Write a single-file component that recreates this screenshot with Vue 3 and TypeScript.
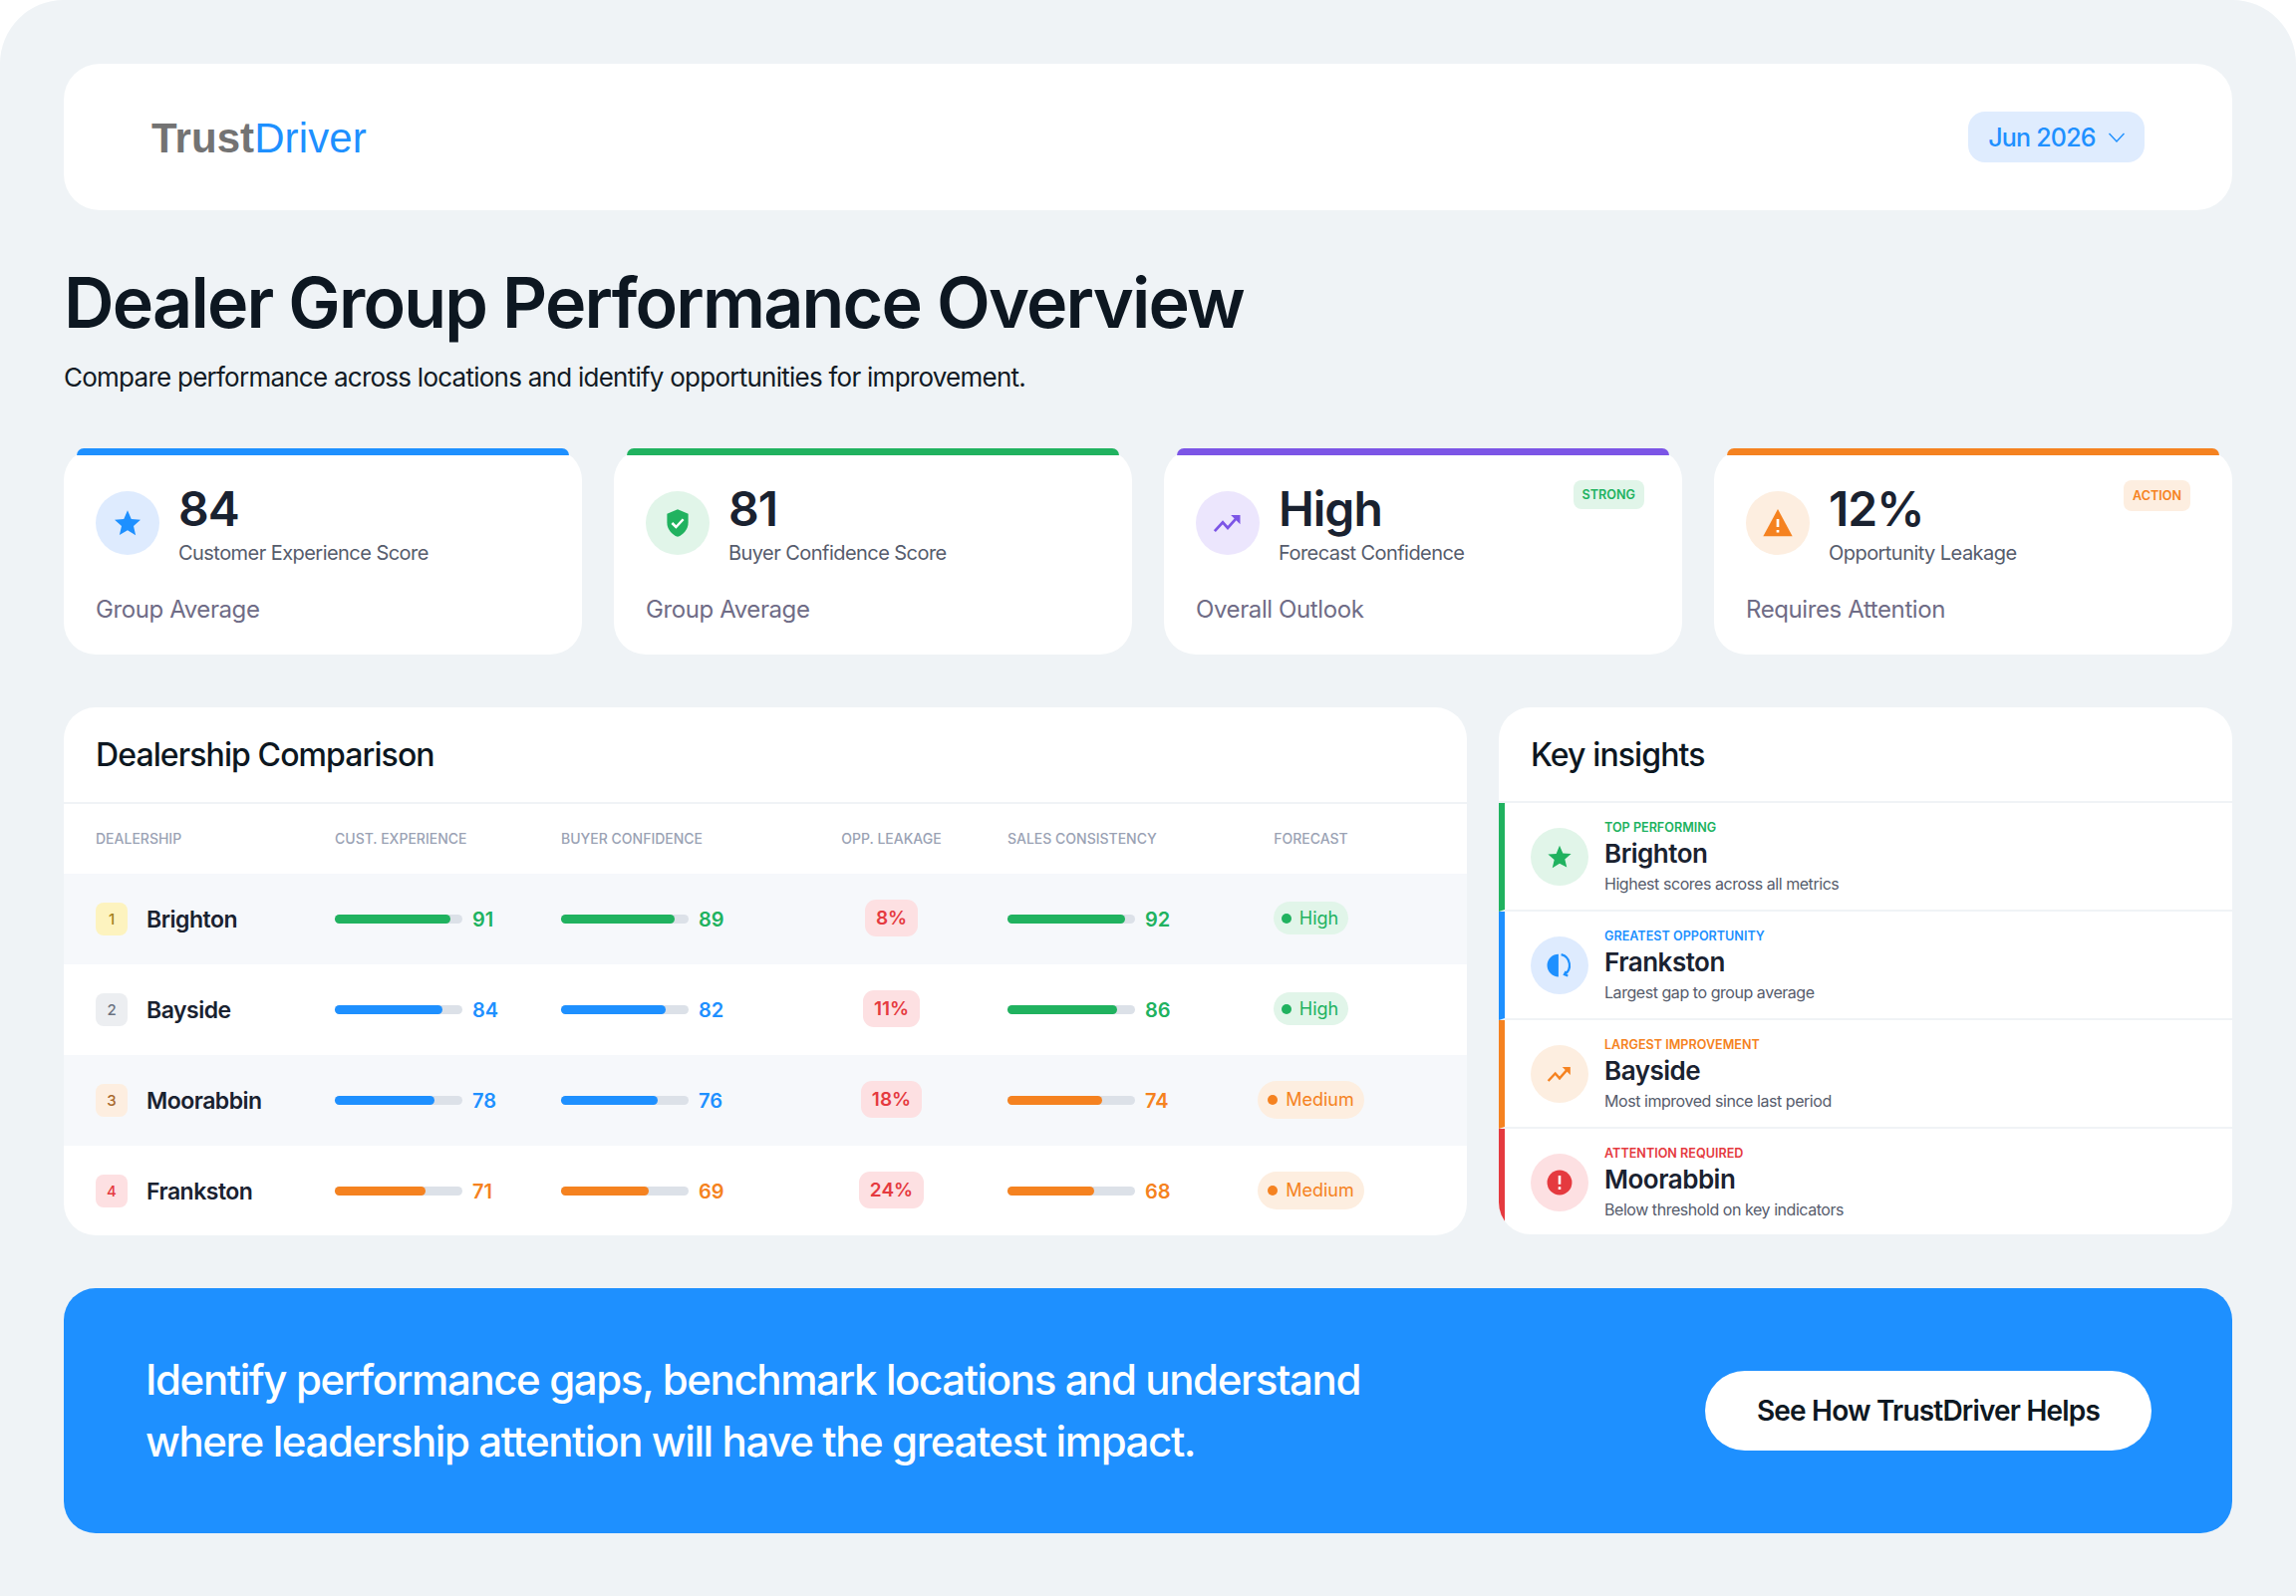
<script setup lang="ts">
interface Kpi { value: string; label: string; foot: string; color: string; soft: string; icon: string; tag?: string }
interface Metric { v: number; w: number; c: string }
interface Row { rank: number; name: string; rc: string; rbg: string; m1: Metric; m2: Metric; leak: string; m3: Metric; fc: string }
interface Insight { tag: string; name: string; desc: string; color: string; soft: string; icon: string }

const G = '#20b25f', B = '#1e90ff', O = '#f58220', R = '#e53a3f', P = '#7c55e6'
const kpis: Kpi[] = [
  { value: '84', label: 'Customer Experience Score', foot: 'Group Average', color: B, soft: '#deebfe', icon: 'star' },
  { value: '81', label: 'Buyer Confidence Score', foot: 'Group Average', color: G, soft: '#e1f5e9', icon: 'shield' },
  { value: 'High', label: 'Forecast Confidence', foot: 'Overall Outlook', color: P, soft: '#ece6fd', icon: 'trend', tag: 'STRONG' },
  { value: '12%', label: 'Opportunity Leakage', foot: 'Requires Attention', color: O, soft: '#fdeee0', icon: 'warn', tag: 'ACTION' }
]
const rows: Row[] = [
  { rank: 1, name: 'Brighton', rc: '#a3811c', rbg: '#fdf3bf', m1: { v: 91, w: 91, c: G }, m2: { v: 89, w: 89, c: G }, leak: '8%', m3: { v: 92, w: 92, c: G }, fc: 'High' },
  { rank: 2, name: 'Bayside', rc: '#6b7280', rbg: '#eceef1', m1: { v: 84, w: 84, c: B }, m2: { v: 82, w: 82, c: B }, leak: '11%', m3: { v: 86, w: 86, c: G }, fc: 'High' },
  { rank: 3, name: 'Moorabbin', rc: '#a9692c', rbg: '#fdeee0', m1: { v: 78, w: 78, c: B }, m2: { v: 76, w: 76, c: B }, leak: '18%', m3: { v: 74, w: 74, c: O }, fc: 'Medium' },
  { rank: 4, name: 'Frankston', rc: R, rbg: '#fde0e2', m1: { v: 71, w: 71, c: O }, m2: { v: 69, w: 69, c: O }, leak: '24%', m3: { v: 68, w: 68, c: O }, fc: 'Medium' }
]
const insights: Insight[] = [
  { tag: 'TOP PERFORMING', name: 'Brighton', desc: 'Highest scores across all metrics', color: G, soft: '#e1f5e9', icon: 'star' },
  { tag: 'GREATEST OPPORTUNITY', name: 'Frankston', desc: 'Largest gap to group average', color: B, soft: '#deebfe', icon: 'half' },
  { tag: 'LARGEST IMPROVEMENT', name: 'Bayside', desc: 'Most improved since last period', color: O, soft: '#fdeee0', icon: 'trend' },
  { tag: 'ATTENTION REQUIRED', name: 'Moorabbin', desc: 'Below threshold on key indicators', color: R, soft: '#fde0e2', icon: 'alert' }
]
const heads = ['DEALERSHIP', 'CUST. EXPERIENCE', 'BUYER CONFIDENCE', 'OPP. LEAKAGE', 'SALES CONSISTENCY', 'FORECAST']
</script>

<template>
  <div class="frame">
    <header class="top">
      <div class="logo"><b>Trust</b><span>Driver</span></div>
      <div class="date">Jun 2026
        <svg width="16" height="10" viewBox="0 0 16 10" fill="none" stroke="#1e90ff" stroke-width="1.4"><path d="M.5 1 8 9l7.500-8" /></svg>
      </div>
    </header>

    <h1>Dealer Group Performance Overview</h1>
    <p class="sub">Compare performance across locations and identify opportunities for improvement.</p>

    <section class="kpis">
      <article v-for="k in kpis" :key="k.label" class="kpi">
        <div class="kbar" :style="{ background: k.color }"></div>
        <div class="kmain">
          <div class="kcircle" :style="{ background: k.soft }">
            <svg v-if="k.icon === 'star'" width="30" height="30" viewBox="0 0 24 24" :fill="k.color"><path d="M12 1.800l3 7 7.400.6-5.600 4.900 1.700 7.400L12 17.800l-6.500 3.900 1.700-7.400L1.600 9.400 9 8.800z" /></svg>
            <svg v-else-if="k.icon === 'shield'" width="30" height="30" viewBox="0 0 24 24"><path :fill="k.color" d="M12 1 3.500 4.500v7c0 5.300 3.600 9.700 8.500 11.500 4.900-1.800 8.500-6.200 8.500-11.500v-7z" /><path d="M7.500 12l3.200 3.200 5.800-6.200" fill="none" stroke="#fff" stroke-width="2" /></svg>
            <svg v-else-if="k.icon === 'trend'" width="30" height="30" viewBox="0 0 24 24" fill="none" :stroke="k.color" stroke-width="2.200"><path d="M1.500 18.500 8 11.500l4 4.500 7.500-8.500" /><path stroke="none" :fill="k.color" d="M14.500 5.500H22V13z" /></svg>
            <svg v-else width="32" height="32" viewBox="0 0 24 24"><path :fill="k.color" d="M12 1.500 23 22H1z" /><path d="M12 9v6M12 17.200v2" stroke="#fff" stroke-width="2" /></svg>
          </div>
          <div class="ktext">
            <div class="kval">{{ k.value }}</div>
            <div class="klabel">{{ k.label }}</div>
          </div>
          <span v-if="k.tag" class="ktag" :class="k.tag === 'STRONG' ? 'strong' : 'action'">{{ k.tag }}</span>
        </div>
        <div class="kfoot">{{ k.foot }}</div>
      </article>
    </section>

    <section class="mid">
      <div class="card compare">
        <h2>Dealership Comparison</h2>
        <div class="grid head">
          <div v-for="(h, i) in heads" :key="h" :class="{ mid1: i === 3 || i === 5 }">{{ h }}</div>
        </div>
        <div v-for="(r, i) in rows" :key="r.name" class="grid row" :class="{ alt: i % 2 === 0 }">
          <div class="dealer">
            <span class="rank" :style="{ color: r.rc, background: r.rbg }">{{ r.rank }}</span>
            <span class="dname">{{ r.name }}</span>
          </div>
          <div v-for="m in [r.m1, r.m2]" :key="m.v" class="metric">
            <div class="track"><div class="fill" :style="{ width: m.w + '%', background: m.c }"></div></div>
            <span class="mval" :style="{ color: m.c }">{{ m.v }}</span>
          </div>
          <div class="mid1"><span class="leak">{{ r.leak }}</span></div>
          <div class="metric">
            <div class="track"><div class="fill" :style="{ width: r.m3.w + '%', background: r.m3.c }"></div></div>
            <span class="mval" :style="{ color: r.m3.c }">{{ r.m3.v }}</span>
          </div>
          <div class="mid1"><span class="fc" :class="r.fc === 'High' ? 'hi' : 'me'"><i></i>{{ r.fc }}</span></div>
        </div>
      </div>

      <div class="card insights">
        <h2>Key insights</h2>
        <div v-for="n in insights" :key="n.tag" class="ins" :style="{ borderLeftColor: n.color }">
          <div class="icircle" :style="{ background: n.soft }">
            <svg v-if="n.icon === 'star'" width="26" height="26" viewBox="0 0 24 24" :fill="n.color"><path d="M12 1.500l3.100 7.200 7.600.6-5.800 5 1.800 7.500L12 18.300l-6.700 4 1.800-7.500-5.800-5 7.600-.6z" /></svg>
            <svg v-else-if="n.icon === 'half'" width="26" height="26" viewBox="0 0 24 24" fill="none"><path :fill="n.color" d="M11 1.500a10.500 10.500 0 0 0 0 21z" /><path :stroke="n.color" stroke-width="2" d="M13.500 2a10.200 10.200 0 0 1 3 18.500M18 17.500l-1.500 3 3.200 1.200" /></svg>
            <svg v-else-if="n.icon === 'trend'" width="26" height="26" viewBox="0 0 24 24" fill="none" :stroke="n.color" stroke-width="2.200"><path d="M1.500 18.500 8 11.500l4 4.500 7.500-8.500" /><path stroke="none" :fill="n.color" d="M14.500 5.500H22V13z" /></svg>
            <svg v-else width="26" height="26" viewBox="0 0 24 24"><circle cx="12" cy="12" r="11.500" :fill="n.color" /><path d="M12 5.500v8M12 16v2.500" stroke="#fff" stroke-width="2.400" /></svg>
          </div>
          <div class="itext">
            <div class="itag" :style="{ color: n.color }">{{ n.tag }}</div>
            <div class="iname">{{ n.name }}</div>
            <div class="idesc">{{ n.desc }}</div>
          </div>
        </div>
      </div>
    </section>

    <section class="cta">
      <p>Identify performance gaps, benchmark locations and understand<br />where leadership attention will have the greatest impact.</p>
      <button class="btn">See How TrustDriver Helps</button>
    </section>
  </div>
</template>

<style>
html, body { margin: 0; background: #fff; }
</style>

<style scoped>
.frame {
  width: 2304px; height: 1602px; box-sizing: border-box; padding: 64px 64px 0;
  background: #eff3f6; border-radius: 64px 64px 0 0; overflow: hidden;
  font-family: Inter, "Noto Sans", sans-serif; color: #0e1822;
}
.top {
  height: 147px; box-sizing: border-box; background: #fff; border-radius: 36px;
  display: flex; align-items: center; justify-content: space-between; padding: 0 88px;
}
.logo { font-family: "Liberation Sans", sans-serif; font-size: 42px; letter-spacing: .1px; line-height: 1; padding-top: 2px; }
.logo b { color: #737373; font-weight: 700; }
.logo span { color: #1e90ff; }
.date {
  width: 177px; height: 51px; box-sizing: border-box; border-radius: 17px; background: #dfecfe; color: #1e90ff;
  display: flex; align-items: center; justify-content: center; gap: 13px; font-size: 25px; font-weight: 500; letter-spacing: -.8px;
}
h1 { margin: 51px 0 0; font-size: 70px; line-height: 84px; font-weight: 600; letter-spacing: -1.8px; color: #0d1721; }
.sub { margin: 16px 0 0; font-size: 26px; line-height: 34px; letter-spacing: -.75px; color: #111a24; }
.kpis { display: grid; grid-template-columns: repeat(4, 520px); gap: 32px; margin-top: 54px; }
.kpi { height: 207px; background: #fff; border-radius: 32px; position: relative; padding: 0 32px; box-sizing: border-box; }
.kbar { height: 7px; margin: 0 -19px; border-radius: 18px 18px 0 0; }
.kmain { display: flex; gap: 19px; padding-top: 26px; position: relative; }
.kcircle { width: 64px; height: 64px; border-radius: 50%; display: flex; align-items: center; justify-content: center; flex: none; margin-top: 10px; }
.ktext { display: flex; flex-direction: column; }
.kval { font-size: 48px; line-height: 56px; font-weight: 600; letter-spacing: -1px; color: #1a2230; }
.klabel { font-size: 20px; line-height: 26px; margin-top: 3px; color: #565c6c; letter-spacing: -.55px; }
.ktag { position: absolute; font-weight: 600; border-radius: 8px; padding: 0 9px; }
.ktag.strong { top: 25px; right: 6px; font-size: 12.600px; line-height: 29px; color: #20b25f; background: #e1f5e9; }
.ktag.action { top: 25px; right: 10px; font-size: 12.600px; line-height: 31px; color: #f58220; background: #fdeee0; }
.kfoot { margin-top: 28px; font-size: 24px; line-height: 32px; color: #6f6c86; letter-spacing: -.4px; }
.mid { display: flex; gap: 32px; margin-top: 53px; align-items: flex-start; }
.card { background: #fff; border-radius: 32px; overflow: hidden; }
.compare { width: 1408px; height: 530px; }
.insights { width: 736px; height: 529px; }
h2 { margin: 0; height: 97px; box-sizing: border-box; padding: 27px 32px 0; font-size: 32px; line-height: 42px; font-weight: 500; letter-spacing: -.9px; color: #0d1721; border-bottom: 2px solid #f0f3f6; }
.grid { display: grid; grid-template-columns: 240px 227px 215px 233px 209px 191px; padding: 0 61px 0 32px; align-items: center; }
.head { height: 70px; box-sizing: border-box; padding-bottom: 2px; font-size: 14px; font-weight: 500; color: #9aa2b4; }
.mid1 { text-align: center; }
.row { height: 91px; }
.row.alt { background: #f6f8fb; }
.dealer { display: flex; align-items: center; gap: 19px; }
.rank { width: 32px; height: 33px; border-radius: 8px; display: flex; align-items: center; justify-content: center; font-size: 15px; font-weight: 500; }
.dname { font-size: 23px; font-weight: 600; color: #1a2230; letter-spacing: -.5px; }
.metric { display: flex; align-items: center; gap: 10px; }
.track { width: 128px; height: 9px; border-radius: 5px; background: #dce1e8; flex: none; }
.fill { height: 100%; border-radius: 5px; }
.mval { font-size: 20px; font-weight: 600; }
.leak { display: inline-block; background: #fde0e2; color: #e53a3f; font-size: 19px; font-weight: 600; line-height: 37px; border-radius: 11px; padding: 0 11px; margin-bottom: 2px; }
.fc { display: inline-flex; align-items: center; gap: 8px; font-size: 18px; border-radius: 19px; margin-bottom: 2px; }
.fc i { width: 10px; height: 10px; border-radius: 50%; background: currentColor; }
.fc.hi { color: #20b25f; background: #e1f5e9; line-height: 33px; padding: 0 10px 0 8px; }
.fc.me { color: #f58220; background: #fdeee0; line-height: 38px; padding: 0 10px; }
.insights h2 { height: 96px; }
.ins { height: 107px; box-sizing: content-box; border-left: 6px solid; border-bottom: 2px solid #f0f3f6; display: flex; align-items: center; gap: 16px; padding-left: 26px; }
.icircle { width: 58px; height: 58px; border-radius: 50%; display: flex; align-items: center; justify-content: center; flex: none; }
.itext { display: flex; flex-direction: column; padding-top: 2px; }
.itag { font-size: 12.600px; font-weight: 600; line-height: 16px; }
.iname { font-size: 26px; font-weight: 600; line-height: 36px; color: #1a2230; letter-spacing: -.5px; }
.idesc { font-size: 16px; line-height: 24px; color: #565c6c; letter-spacing: -.45px; }
.cta { margin-top: 53px; height: 246px; box-sizing: border-box; background: #1e90ff; border-radius: 32px; display: flex; align-items: center; justify-content: space-between; padding: 0 81px 0 82px; }
.cta p { margin: 0; color: #fff; font-size: 42px; line-height: 62px; font-weight: 500; letter-spacing: -1.4px; }
.btn { width: 448px; height: 80px; border: 0; border-radius: 40px; background: #fff; color: #0e1822; font-family: inherit; font-size: 28px; font-weight: 600; letter-spacing: -.8px; }
</style>
